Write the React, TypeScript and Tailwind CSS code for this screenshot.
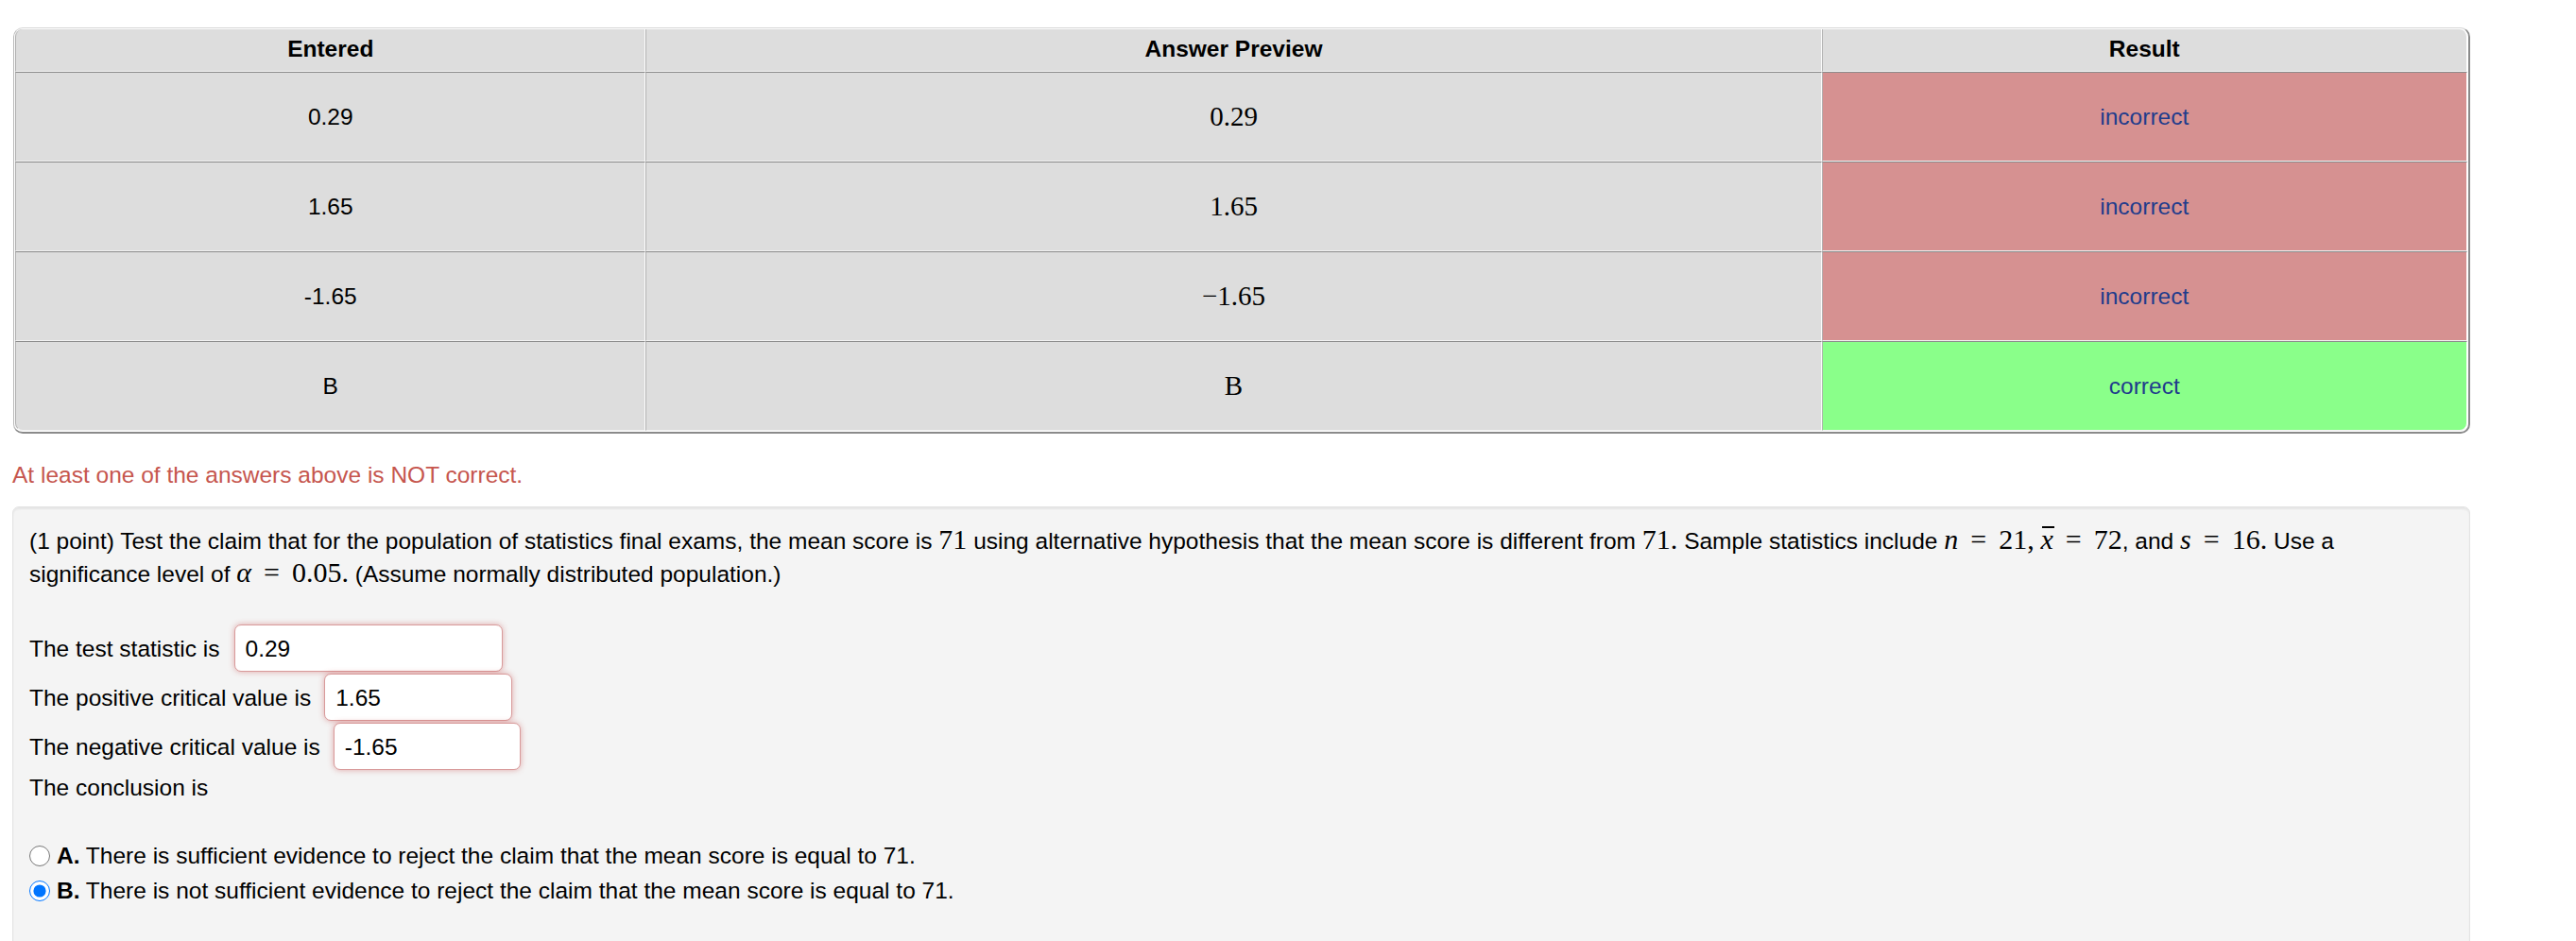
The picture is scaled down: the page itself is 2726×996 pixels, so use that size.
import React from 'react';

type Row = { entered: string; preview: string; ok: boolean };

const rows: Row[] = [
  { entered: '0.29', preview: '0.29', ok: false },
  { entered: '1.65', preview: '1.65', ok: false },
  { entered: '-1.65', preview: '\u22121.65', ok: false },
  { entered: 'B', preview: 'B', ok: true },
];

const Num = ({ children }: { children: React.ReactNode }) => (
  <span className="font-['Liberation_Serif',serif] text-[30px] leading-none">{children}</span>
);

const Var = ({ children }: { children: React.ReactNode }) => (
  <span className="font-['Liberation_Serif',serif] italic text-[30px] leading-none">{children}</span>
);

const Eq = () => (
  <span className="font-['Liberation_Serif',serif] text-[30px] leading-none mx-[13px]">=</span>
);

// x with a bar over it (sample mean)
const XBar = () => (
  <span className="relative font-['Liberation_Serif',serif] italic text-[30px] leading-none">
    x
    <span className="absolute left-[2px] right-[-1px] top-[3px] h-[1.5px] bg-black" />
  </span>
);

const AnswerInput = ({ value, width }: { value: string; width: string }) => (
  <div
    className={`${width} h-[50px] bg-white border border-[#d89a9a] rounded-[7px] shadow-[0_0_6px_rgba(200,70,70,0.45)] flex items-center pl-[11px]`}
  >
    {value}
  </div>
);

export default function App() {
  const headCell =
    'h-[45px] flex items-center justify-center font-bold pb-[4px] border-b border-b-[#f2f2f2] border-l border-l-[#b0b0b0] border-r border-r-white bg-[#dddddd]';
  const dataCell =
    'h-[95px] flex items-center justify-center border-t border-t-[#8a8a8a] border-b border-b-[#f2f2f2] border-l border-l-[#b0b0b0] border-r border-r-white';

  return (
    <div className="min-h-screen bg-white pt-[29px] font-['Liberation_Sans',Arial,sans-serif] text-[24.5px] leading-[35px] text-black">
      {/* Attempt results table */}
      <div className="ml-[14px] w-[2600px] rounded-[10px] border-t border-l border-t-[#d6d6d6] border-l-[#b8b8b8] border-r-2 border-b-2 border-r-[#8a8a8a] border-b-[#8a8a8a] p-[1px] bg-white">
        <div className="grid grid-cols-[668fr_1245fr_684fr]">
          <div className={`${headCell} rounded-tl-[8px]`}>Entered</div>
          <div className={headCell}>Answer Preview</div>
          <div className={`${headCell} rounded-tr-[8px]`}>Result</div>

          {rows.map((r, i) => {
            const last = i === rows.length - 1;
            return (
              <React.Fragment key={i}>
                <div className={`${dataCell} bg-[#dddddd] ${last ? 'rounded-bl-[8px]' : ''}`}>{r.entered}</div>
                <div className={`${dataCell} bg-[#dddddd] font-['Liberation_Serif',serif] text-[29px]`}>{r.preview}</div>
                <div
                  className={`${dataCell} text-[#1f3c8c] ${r.ok ? 'bg-[#8aff8a]' : 'bg-[#d69191]'} ${
                    last ? 'rounded-br-[8px]' : ''
                  }`}
                >
                  {r.ok ? 'correct' : 'incorrect'}
                </div>
              </React.Fragment>
            );
          })}
        </div>
      </div>

      <div className="mt-[26px] ml-[13px] text-[#c6564e]">At least one of the answers above is NOT correct.</div>

      {/* Problem box */}
      <div className="mt-[16px] ml-[13px] w-[2601px] min-h-[480px] bg-[#f4f4f4] border border-[#e3e3e3] rounded-[7px] shadow-[inset_0_2px_2px_rgba(0,0,0,0.06)] pt-[18px] pl-[17px] pb-[40px]">
        <div className="whitespace-nowrap">
          (1 point) Test the claim that for the population of statistics final exams, the mean score is <Num>71</Num> using
          alternative hypothesis that the mean score is different from <Num>71.</Num> Sample statistics include <Var>n</Var>
          <Eq />
          <Num>21,</Num> <XBar />
          <Eq />
          <Num>72</Num>, and <Var>s</Var>
          <Eq />
          <Num>16.</Num> Use a
        </div>
        <div className="whitespace-nowrap">
          significance level of <Var>α</Var>
          <Eq />
          <Num>0.05.</Num> (Assume normally distributed population.)
        </div>

        <div className="mt-[35px] flex flex-col">
          <div className="h-[52px] flex items-center gap-[15px]">
            <span>The test statistic is</span>
            <AnswerInput value="0.29" width="w-[284px]" />
          </div>
          <div className="h-[52px] flex items-center gap-[14px]">
            <span>The positive critical value is</span>
            <AnswerInput value="1.65" width="w-[199px]" />
          </div>
          <div className="h-[52px] flex items-center gap-[14px]">
            <span>The negative critical value is</span>
            <AnswerInput value="-1.65" width="w-[198px]" />
          </div>
        </div>

        <div>The conclusion is</div>

        <div className="mt-[36px] flex flex-col">
          <label className="h-[37px] flex items-center">
            <input type="radio" name="concl" readOnly className="w-[22px] h-[22px] m-0 mr-[7px]" />
            <span>
              <b>A.</b> There is sufficient evidence to reject the claim that the mean score is equal to 71.
            </span>
          </label>
          <label className="h-[37px] flex items-center">
            <input type="radio" name="concl" readOnly checked className="w-[22px] h-[22px] m-0 mr-[7px]" />
            <span>
              <b>B.</b> There is not sufficient evidence to reject the claim that the mean score is equal to 71.
            </span>
          </label>
        </div>
      </div>
    </div>
  );
}
